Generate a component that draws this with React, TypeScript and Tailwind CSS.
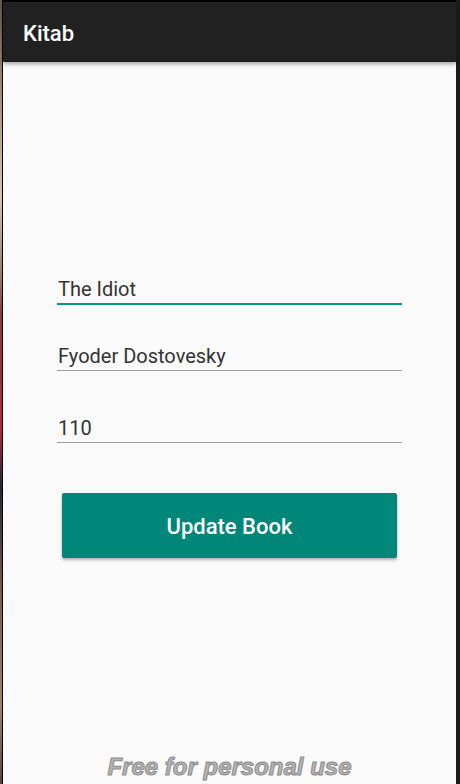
import * as React from 'react';

const fields = [
  { value: 'The Idiot', focused: true },
  { value: 'Fyoder Dostovesky', focused: false },
  { value: '110', focused: false },
];

export default function App() {
  return (
    <div className="flex h-[784px] w-[460px] overflow-hidden bg-black" style={{ fontFamily: 'Roboto, "Liberation Sans", sans-serif' }}>
      {/* strip of the wallpaper behind the phone frame */}
      <div className="w-[2px] bg-[linear-gradient(to_bottom,#6b5a48_0%,#b59a7a_15%,#d8c4a6_25%,#9a7f62_35%,#8a3a3a_40%,#b02a3a_55%,#24243a_62%,#7a5a44_75%,#a08466_90%,#5a4636_100%)]" />
      <div className="w-[1px] bg-black" />

      <div className="flex w-[453px] flex-col bg-[#fafafa]">
        <div className="h-[2px] bg-black" />
        <div className="relative z-10 flex h-[60px] items-center bg-[#212121] px-[20px] pt-[3px] shadow-[0_2px_4px_rgba(0,0,0,0.35)]">
          <h1 className="text-[22px] font-medium leading-[26px] text-white">Kitab</h1>
        </div>

        <div className="flex flex-1 flex-col px-[54px] pt-[213px]">
          {fields.map((f, i) => (
            <div
              key={f.value}
              className={`${i === 1 ? 'mt-[37px]' : i === 2 ? 'mt-[43px]' : ''} ${
                f.focused ? 'border-b-2 border-[#009688]' : 'border-b border-[#9e9e9e]'
              } pt-[1px] pb-[1px] pl-[1px] text-[20px] leading-[26px] text-[#333333]`}
            >
              {f.value}
            </div>
          ))}

          <button className="mx-[5px] mt-[50px] h-[65px] rounded-[2px] bg-[#00877a] pt-[2px] text-[22px] font-medium text-white shadow-[0_2px_3px_rgba(0,0,0,0.3)]">
            Update Book
          </button>

          <div className="mt-auto pb-[2px] text-center">
            <span
              className="text-[24px] font-bold italic leading-[28px] text-[#b4b4b4] [-webkit-text-stroke:1px_#8c8c8c]"
              style={{ fontFamily: '"Liberation Sans", Arial, sans-serif' }}
            >
              Free for personal use
            </span>
          </div>
        </div>
      </div>

      <div className="w-[4px] bg-[#1c1c1c]" />
    </div>
  );
}
